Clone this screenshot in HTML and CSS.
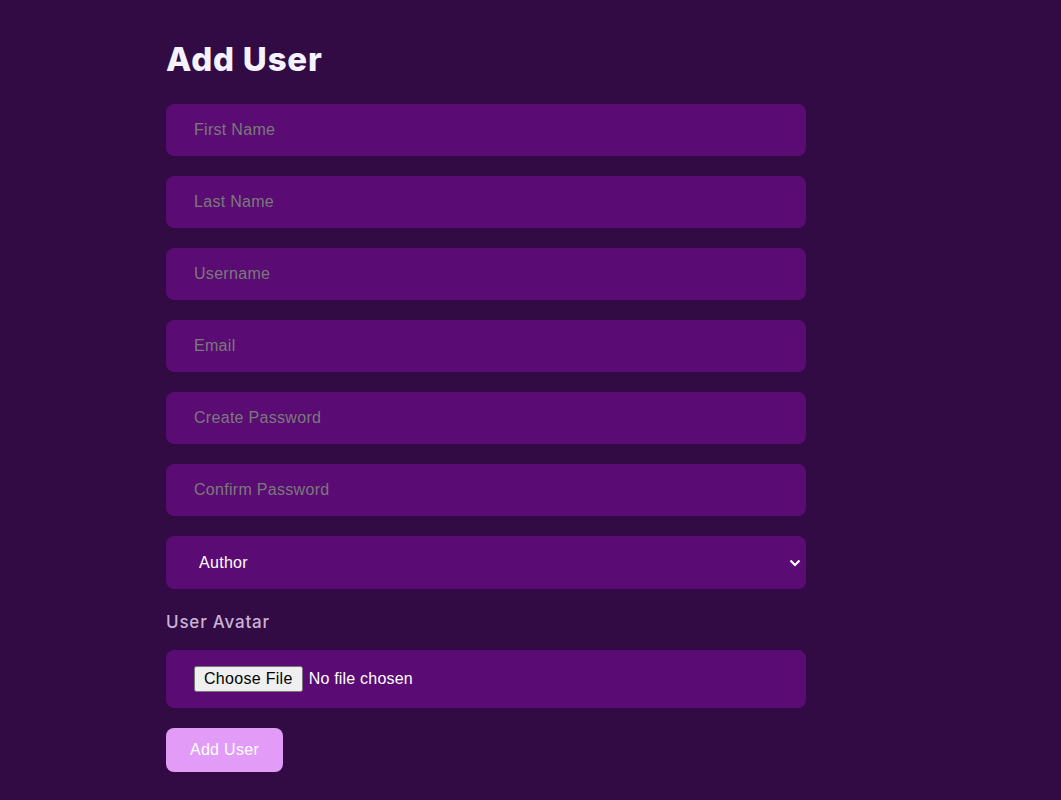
FILE: index.html
```html
<!DOCTYPE html>
<html lang="en">
<head>
<meta charset="utf-8">
<title>Add User</title>
<link rel="stylesheet" href="styles.css">
</head>
<body>
<main class="page">
  <h1 class="title">Add User</h1>
  <form class="form">
    <input class="field" type="text" placeholder="First Name">
    <input class="field" type="text" placeholder="Last Name">
    <input class="field" type="text" placeholder="Username">
    <input class="field" type="email" placeholder="Email">
    <input class="field" type="password" placeholder="Create Password">
    <input class="field" type="password" placeholder="Confirm Password">
    <select class="field select">
      <option>Author</option>
      <option>Admin</option>
    </select>
    <label class="label">User Avatar</label>
    <div class="filebox"><input class="file" type="file"></div>
    <div><button class="submit" type="button">Add User</button></div>
  </form>
</main>
</body>
</html>
```
FILE: styles.css
```css
html, body {
  margin: 0;
  background: #320a44;
  min-height: 100%;
}
body {
  font-family: "Liberation Sans", Arial, sans-serif;
}
.page {
  width: 640px;
  margin-left: 166px;
  padding-top: 36px;
}
.title {
  margin: 0 0 22px;
  font-family: "Inter", sans-serif;
  font-weight: 800;
  font-size: 33px;
  line-height: 46px;
  color: #f4f2ff;
  letter-spacing: 0.8px;
}
.form {
  display: flex;
  flex-direction: column;
  gap: 20px;
}
.field {
  box-sizing: border-box;
  width: 640px;
  height: 52px;
  border: none;
  border-radius: 8px;
  background: #5a0b74;
  padding: 0 28px;
  font-family: "Liberation Sans", Arial, sans-serif;
  font-size: 16px;
  letter-spacing: 0.3px;
  color: #ffffff;
  outline: none;
}
.field::placeholder {
  color: #7a7a7a;
}
.select {
  height: 53px;
  padding: 0 30px 0 33px;
  color: #ffffff;
  -webkit-appearance: none;
  appearance: none;
  background-color: #5a0b74;
  background-image: url("data:image/svg+xml,%3Csvg xmlns='http://www.w3.org/2000/svg' width='12' height='8' viewBox='0 0 12 8'%3E%3Cpath d='M1.5 1.5 L6 6 L10.5 1.5' fill='none' stroke='white' stroke-width='2.2'/%3E%3C/svg%3E");
  background-repeat: no-repeat;
  background-position: right 5px center;
  background-size: 12px 8px;
}
.select option {
  background: #5a0b74;
}
.label {
  margin: 2px 0 -3px;
  font-family: "Inter", sans-serif;
  font-size: 17px;
  font-weight: 500;
  color: #c9b3d6;
  line-height: 22px;
  letter-spacing: 0.8px;
}
.filebox {
  box-sizing: border-box;
  height: 58px;
  border-radius: 8px;
  background: #5a0b74;
  padding: 0 28px;
  display: flex;
  align-items: center;
}
.file {
  font-family: "Liberation Sans", Arial, sans-serif;
  font-size: 16px;
  letter-spacing: 0.2px;
  color: #ffffff;
}
.file::file-selector-button {
  font-family: "Liberation Sans", Arial, sans-serif;
  font-size: 16px;
  letter-spacing: 0.3px;
  padding: 2px 8px;
  margin-right: 6px;
}
.submit {
  height: 44px;
  width: 117px;
  border: none;
  border-radius: 8px;
  background: #e29cf7;
  color: #ffffff;
  font-family: "Liberation Sans", Arial, sans-serif;
  font-size: 16px;
  letter-spacing: 0.3px;
  cursor: pointer;
}
```
